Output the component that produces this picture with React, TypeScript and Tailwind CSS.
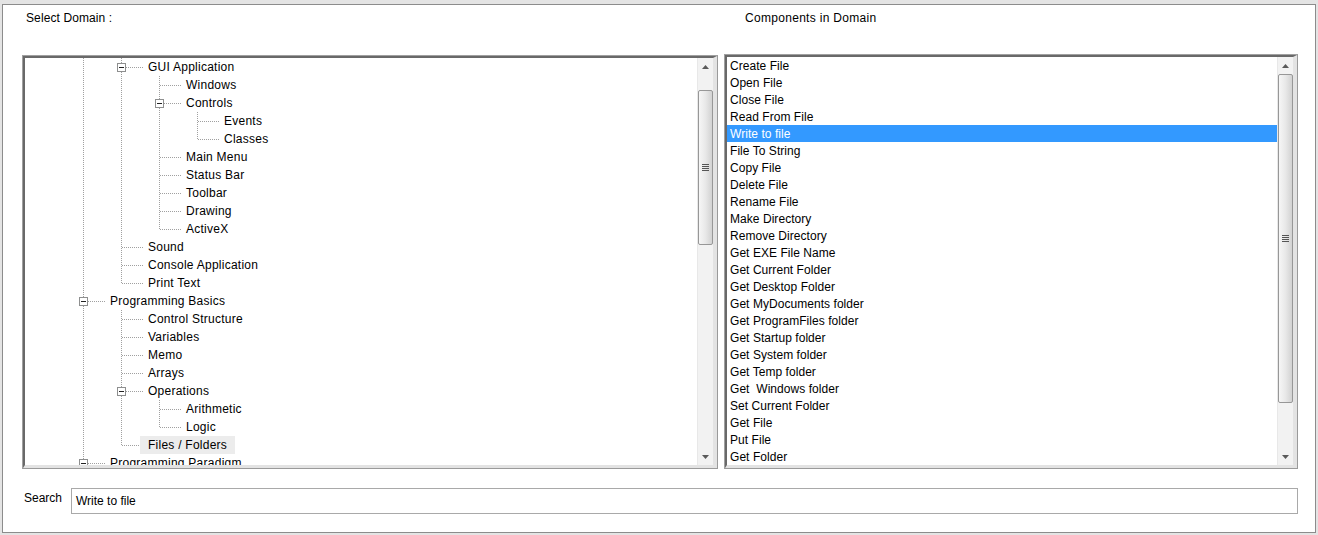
import React from "react";

type Seg = "pass" | "tee" | "end";

type TreeRow = {
  label: string;
  cols: Seg[];
  box?: boolean;
  hl?: boolean;
};

const treeRows: TreeRow[] = [
  { label: "GUI Application", cols: ["pass", "tee"], box: true },
  { label: "Windows", cols: ["pass", "pass", "tee"] },
  { label: "Controls", cols: ["pass", "pass", "tee"], box: true },
  { label: "Events", cols: ["pass", "pass", "pass", "tee"] },
  { label: "Classes", cols: ["pass", "pass", "pass", "end"] },
  { label: "Main Menu", cols: ["pass", "pass", "tee"] },
  { label: "Status Bar", cols: ["pass", "pass", "tee"] },
  { label: "Toolbar", cols: ["pass", "pass", "tee"] },
  { label: "Drawing", cols: ["pass", "pass", "tee"] },
  { label: "ActiveX", cols: ["pass", "pass", "end"] },
  { label: "Sound", cols: ["pass", "tee"] },
  { label: "Console Application", cols: ["pass", "tee"] },
  { label: "Print Text", cols: ["pass", "end"] },
  { label: "Programming Basics", cols: ["tee"], box: true },
  { label: "Control Structure", cols: ["pass", "tee"] },
  { label: "Variables", cols: ["pass", "tee"] },
  { label: "Memo", cols: ["pass", "tee"] },
  { label: "Arrays", cols: ["pass", "tee"] },
  { label: "Operations", cols: ["pass", "tee"], box: true },
  { label: "Arithmetic", cols: ["pass", "pass", "tee"] },
  { label: "Logic", cols: ["pass", "pass", "end"] },
  { label: "Files / Folders", cols: ["pass", "end"], hl: true },
  { label: "Programming Paradigm", cols: ["tee"], box: true },
];

const components = [
  "Create File",
  "Open File",
  "Close File",
  "Read From File",
  "Write to file",
  "File To String",
  "Copy File",
  "Delete File",
  "Rename File",
  "Make Directory",
  "Remove Directory",
  "Get EXE File Name",
  "Get Current Folder",
  "Get Desktop Folder",
  "Get MyDocuments folder",
  "Get ProgramFiles folder",
  "Get Startup folder",
  "Get System folder",
  "Get Temp folder",
  "Get  Windows folder",
  "Set Current Folder",
  "Get File",
  "Put File",
  "Get Folder",
];

const LINE = "#a0a0a0";

function TreeCell({ seg, last, box }: { seg: Seg; last: boolean; box?: boolean }) {
  return (
    <svg width="38" height="18" overflow="visible" className="shrink-0">
      {seg === "pass" || seg === "tee" ? (
        <line x1="19.5" y1="0" x2="19.5" y2="18" stroke={LINE} strokeDasharray="1 1" shapeRendering="crispEdges" />
      ) : (
        <line x1="19.5" y1="0" x2="19.5" y2="10" stroke={LINE} strokeDasharray="1 1" shapeRendering="crispEdges" />
      )}
      {last ? (
        <line x1={box ? 24 : 20} y1="9.5" x2="42" y2="9.5" stroke={LINE} strokeDasharray="1 1" shapeRendering="crispEdges" />
      ) : null}
      {last && box ? (
        <g shapeRendering="crispEdges">
          <rect x="15.5" y="5.5" width="8" height="8" fill="#fff" stroke="#8e8f8f" />
          <line x1="17" y1="9.5" x2="22" y2="9.5" stroke="#222" />
        </g>
      ) : null}
    </svg>
  );
}

function ScrollArrow({ down }: { down?: boolean }) {
  return (
    <div className="flex h-[17px] shrink-0 items-center justify-center">
      <svg width="7" height="4" viewBox="0 0 7 4">
        {down ? <path d="M0 0 L7 0 L3.5 4 Z" fill="#5a5a5a" /> : <path d="M0 4 L3.5 0 L7 4 Z" fill="#5a5a5a" />}
      </svg>
    </div>
  );
}

function ScrollBar({ thumbClass }: { thumbClass: string }) {
  return (
    <div className="flex h-full w-[16px] shrink-0 flex-col border-l border-[#e8e8e8] bg-[#f2f2f2]">
      <ScrollArrow />
      <div className="flex-1">
        <div
          className={`${thumbClass} flex items-center justify-center rounded-[2px] border border-[#979797] bg-[linear-gradient(to_right,#f6f6f6,#e8e8e8_50%,#d2d2d2)]`}
        >
          <svg width="7" height="7" shapeRendering="crispEdges">
            <line x1="0" y1="0.5" x2="7" y2="0.5" stroke="#555" />
            <line x1="0" y1="2.5" x2="7" y2="2.5" stroke="#555" />
            <line x1="0" y1="4.5" x2="7" y2="4.5" stroke="#555" />
            <line x1="0" y1="6.5" x2="7" y2="6.5" stroke="#555" />
          </svg>
        </div>
      </div>
      <ScrollArrow down />
    </div>
  );
}

function Sunken({ className, children }: { className: string; children: React.ReactNode }) {
  return (
    <div className={`${className} border border-t-[#a0a0a0] border-l-[#a0a0a0] border-b-[#9a9a9a] border-r-[#9a9a9a]`}>
      <div className="h-full border-t-2 border-l-2 border-r-[4px] border-b-[3px] border-t-[#696969] border-l-[#696969] border-b-[#e3e3e3] border-r-[#e3e3e3] bg-white">
        {children}
      </div>
    </div>
  );
}

export default function App() {
  return (
    <div className="h-[535px] w-[1318px] bg-[#e4e4e4] pb-[2px] pl-[2px] pr-[2px] pt-[4px] font-['Liberation_Sans',Arial,sans-serif] text-[12px] leading-[14px] text-black">
      <div className="flex h-full flex-col border border-[#8c8c8c] bg-white pl-[19px] pr-[17px]">
        <div className="flex h-[48px] shrink-0 pt-[6px]">
          <div className="w-[702px] pl-[4px] tracking-[0.1px]">Select Domain :</div>
          <div className="pl-[21px] tracking-[0.3px]">Components in Domain</div>
        </div>

        <div className="flex h-[416px] shrink-0 gap-[6px]">
          <Sunken className="mt-[2px] h-[414px] w-[696px]">
            <div className="flex h-full">
              <div className="flex-1 overflow-hidden pl-[39px]">
                {treeRows.map((row) => (
                  <div key={row.label} className="flex h-[18px] items-center">
                    {row.cols.map((seg, i) => (
                      <TreeCell key={i} seg={seg} last={i === row.cols.length - 1} box={row.box} />
                    ))}
                    <span
                      className={`flex h-[18px] items-center whitespace-pre px-2 tracking-[0.25px] ${row.hl ? "bg-[#ececec]" : ""}`}
                    >
                      {row.label}
                    </span>
                  </div>
                ))}
              </div>
              <ScrollBar thumbClass="mt-[15px] h-[155px]" />
            </div>
          </Sunken>

          <Sunken className="mt-[1px] h-[415px] w-[574px]">
            <div className="flex h-full">
              <div className="flex-1 overflow-hidden">
                {components.map((c) => (
                  <div
                    key={c}
                    className={`flex h-[17px] items-center whitespace-pre pl-[3px] tracking-[0.05px] ${c === "Write to file" ? "bg-[#3399ff] text-white" : ""}`}
                  >
                    {c}
                  </div>
                ))}
              </div>
              <ScrollBar thumbClass="h-[329px]" />
            </div>
          </Sunken>
        </div>

        <div className="mt-[19px] flex h-[26px] shrink-0">
          <div className="w-[49px] pl-[2px] pt-[3px]">Search</div>
          <div className="flex flex-1 items-center border border-[#a9a9a9] pl-[4px]">Write to file</div>
        </div>
      </div>
    </div>
  );
}
